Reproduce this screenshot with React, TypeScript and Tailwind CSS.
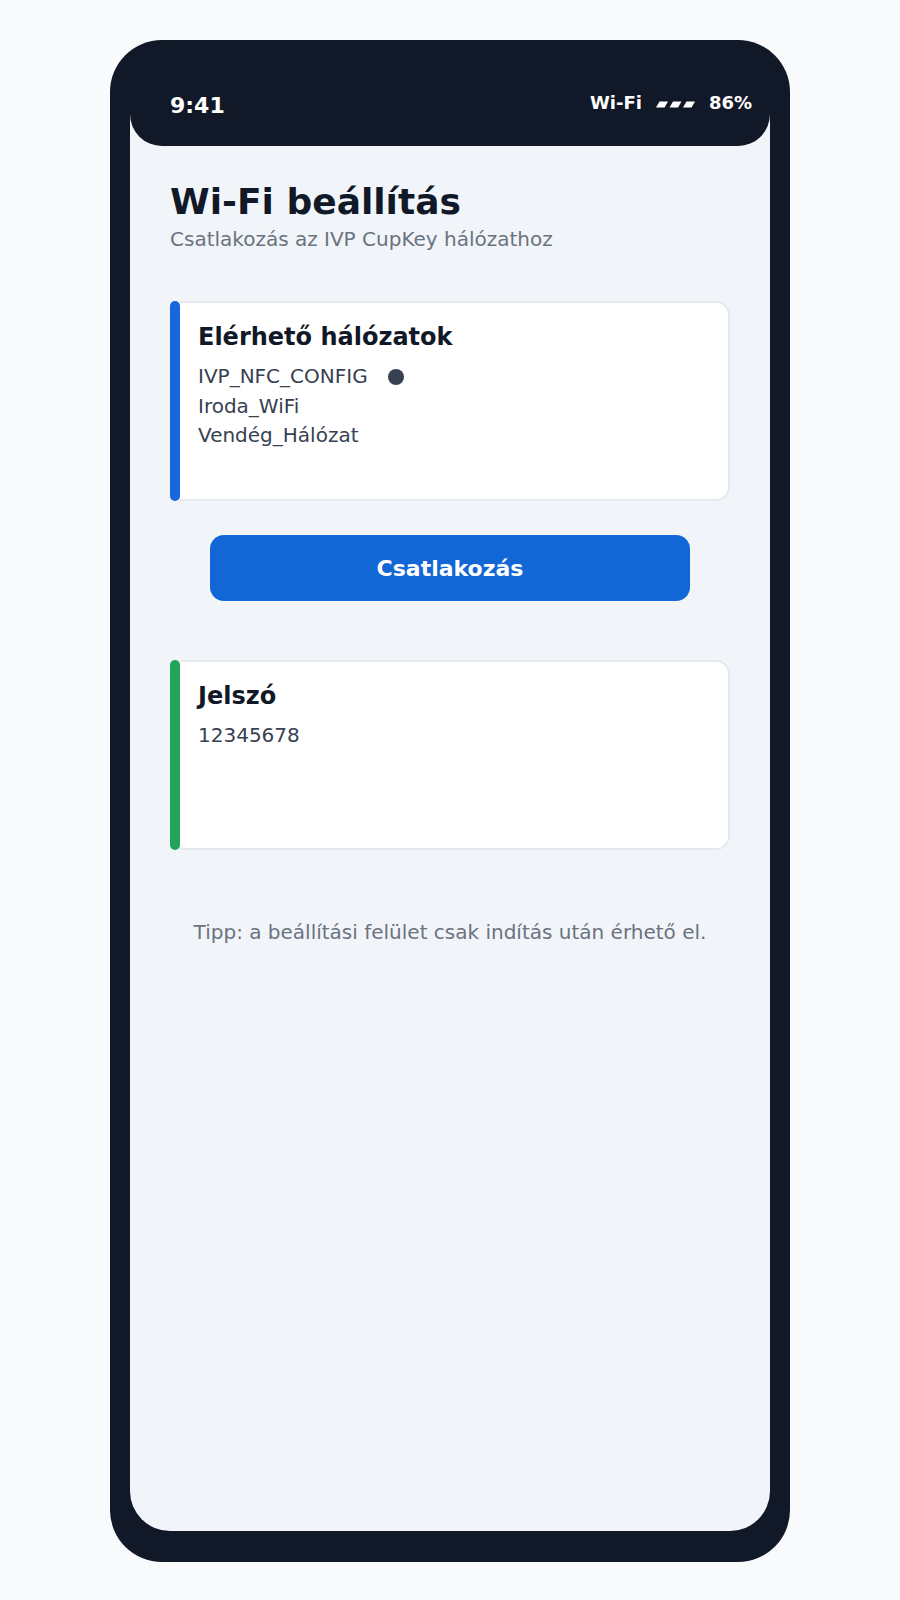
import React from "react";

function Bars() {
  return (
    <svg width="39" height="7" viewBox="0 0 39 7" className="mt-[3px]">
      <polygon points="0,6.5 3.5,0.5 12,0.5 8.5,6.5" fill="#ffffff" />
      <polygon points="13.5,6.5 17,0.5 25.5,0.5 22,6.5" fill="#ffffff" />
      <polygon points="27,6.5 30.5,0.5 39,0.5 35.5,6.5" fill="#ffffff" />
    </svg>
  );
}

function Card({
  color,
  title,
  height,
  children,
}: {
  color: string;
  title: string;
  height: string;
  children: React.ReactNode;
}) {
  return (
    <div className={`flex ${height}`}>
      <div className={`w-[10px] rounded-[5px] ${color}`} />
      <div className="flex-1 bg-white border-y-2 border-r-2 border-[#e6e9ee] rounded-r-[14px] pl-[18px] pt-4">
        <div className="text-[24px] font-bold leading-[36px] text-[#111827]">{title}</div>
        <div className="mt-[7px] text-[20px] leading-[29.5px] text-[#374151]">{children}</div>
      </div>
    </div>
  );
}

export default function App() {
  return (
    <div className="min-h-screen bg-[#f8fafc] flex justify-center py-10 font-['DejaVu_Sans',sans-serif]">
      <div className="w-[680px] h-[1522px] rounded-[52px] bg-[#111827] px-5 pt-5 pb-[31px] flex flex-col">
        <div className="flex-1 rounded-b-[40px] bg-[#f1f5f9] overflow-hidden flex flex-col">
          <div className="h-[86px] shrink-0 bg-[#111827] rounded-b-[32px] flex items-center justify-between pl-10 pr-[18px] text-white font-bold">
            <span className="text-[22px] leading-none mt-[5px]">9:41</span>
            <div className="flex items-center gap-[14px] text-[18px] leading-none">
              <span>Wi-Fi</span>
              <Bars />
              <span>86%</span>
            </div>
          </div>

          <div className="px-10 pt-[34px] flex flex-col">
            <h1 className="text-[36px] font-bold leading-[1.2] text-[#111827]">Wi-Fi beállítás</h1>
            <p className="mt-px text-[20px] leading-[30px] text-[#6b7280]">
              Csatlakozás az IVP CupKey hálózathoz
            </p>

            <div className="mt-[47px]">
              <Card color="bg-[#1668dc]" title="Elérhető hálózatok" height="h-[200px]">
                <div className="flex items-center">
                  <span>IVP_NFC_CONFIG</span>
                  <span className="ml-5 w-4 h-4 rounded-full bg-[#374151]" />
                </div>
                <div>Iroda_WiFi</div>
                <div>Vendég_Hálózat</div>
              </Card>
            </div>

            <button className="mt-[34px] mx-auto w-[480px] h-[66px] rounded-[14px] bg-[#1366d6] text-white text-[22px] font-bold flex items-center justify-center">
              Csatlakozás
            </button>

            <div className="mt-[59px]">
              <Card color="bg-[#22a55b]" title="Jelszó" height="h-[190px]">
                <div>12345678</div>
              </Card>
            </div>

            <p className="mt-[67px] text-center text-[20px] leading-[30px] text-[#6b7280]">
              Tipp: a beállítási felület csak indítás után érhető el.
            </p>
          </div>
        </div>
      </div>
    </div>
  );
}
